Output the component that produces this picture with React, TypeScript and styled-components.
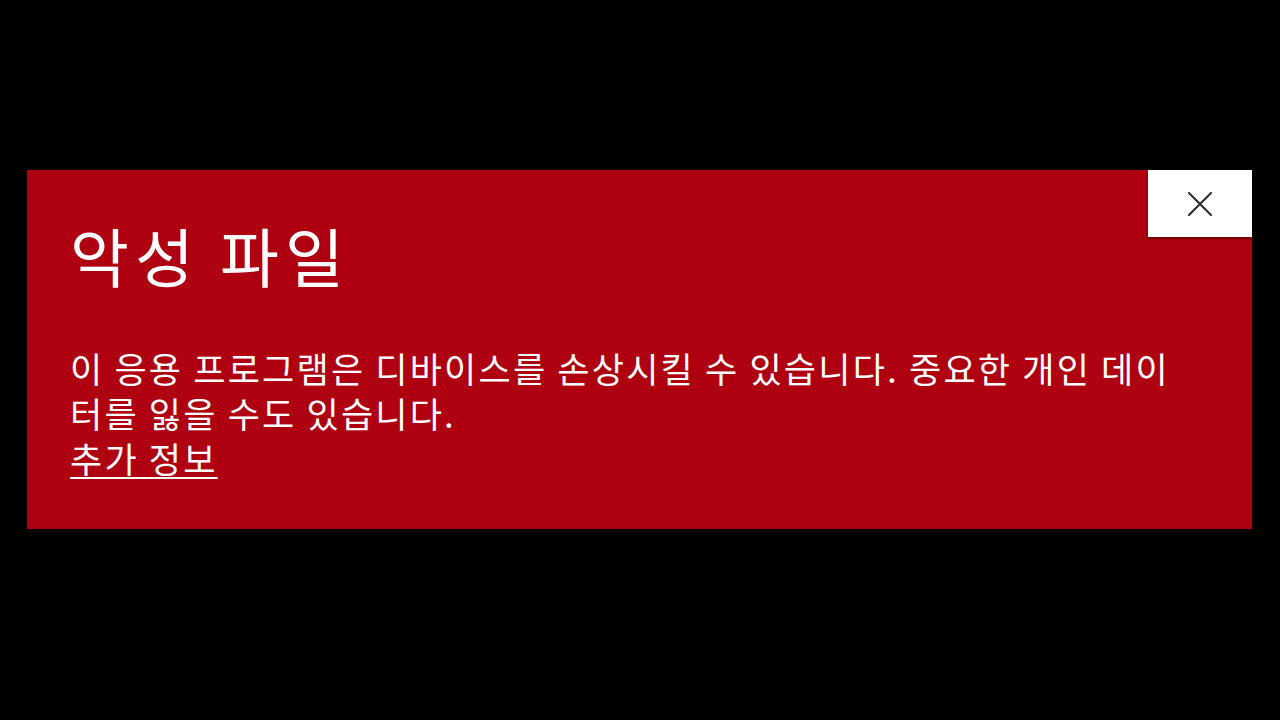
import styled, { createGlobalStyle } from 'styled-components'

const GlobalStyle = createGlobalStyle`
  html, body {
    margin: 0;
    padding: 0;
    background: #000;
  }
  body {
    font-family: "Noto Sans CJK KR", "Noto Sans", sans-serif;
  }
`

function App() {
  return (
    <Page>
      <GlobalStyle />
      <Banner role="alert">
        <CloseButton type="button" aria-label="닫기">
          <svg width="24" height="24" viewBox="0 0 24 24" fill="none" stroke="#2b2b2b" strokeWidth="2" strokeLinecap="square">
            <path d="M1 1 L23 23 M23 1 L1 23" />
          </svg>
        </CloseButton>
        <Title>악성 파일</Title>
        <Message>이 응용 프로그램은 디바이스를 손상시킬 수 있습니다. 중요한 개인 데이터를 잃을 수도 있습니다.</Message>
        <MoreLink href="#">추가 정보</MoreLink>
      </Banner>
    </Page>
  )
}

export default App

const Page = styled.div`
  width: 1280px;
  height: 720px;
  box-sizing: border-box;
  padding: 170px 28px 0 27px;
`

const Banner = styled.div`
  position: relative;
  height: 359px;
  box-sizing: border-box;
  padding: 46px 70px 0 43px;
  background: #ae0010;
  color: #fff;
  display: flex;
  flex-direction: column;
  align-items: flex-start;
`

const CloseButton = styled.button`
  position: absolute;
  top: 0;
  right: 0;
  width: 104px;
  height: 67px;
  border: none;
  padding: 0;
  background: #fff;
  box-shadow: -1px 2px 2px rgba(0, 0, 0, 0.35);
  display: flex;
  align-items: center;
  justify-content: center;
  cursor: pointer;
`

const Title = styled.h1`
  margin: 0;
  font-size: 64px;
  font-weight: 400;
  line-height: 77px;
  letter-spacing: 6px;
`

const Message = styled.p`
  margin: 52px 0 0;
  font-size: 35px;
  line-height: 45px;
  letter-spacing: 2.2px;
`

const MoreLink = styled.a`
  display: block;
  font-size: 35px;
  line-height: 45px;
  letter-spacing: 2.2px;
  color: #fff;
  text-decoration: underline;
  text-underline-offset: 4px;
  text-decoration-thickness: 2px;
`
